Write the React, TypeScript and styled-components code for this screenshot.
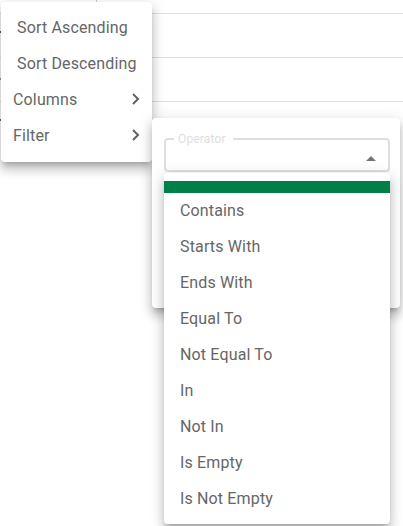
import React from "react";
import styled, { createGlobalStyle } from "styled-components";

const Global = createGlobalStyle`
  html, body { margin: 0; padding: 0; background: #fff; overflow: hidden; }
  body { font-family: Roboto, "Liberation Sans", sans-serif; letter-spacing: 0.15px; }
`;

const Page = styled.div`
  position: relative;
  width: 403px;
  height: 526px;
  overflow: hidden;
  background: #fff;
`;

const GridRows = styled.div`
  display: flex;
  flex-direction: column;
`;

const GridRow = styled.div<{ $h: number; $pad?: number; $last?: boolean }>`
  display: flex;
  align-items: flex-start;
  height: ${(p) => p.$h}px;
  box-sizing: border-box;
  padding-top: ${(p) => p.$pad ?? 0}px;
  border-bottom: ${(p) => (p.$last ? "none" : "1px solid #e0e0e0")};
`;

const HeaderCell = styled.div`
  width: 97px;
  height: 100%;
  box-sizing: border-box;
  border-right: 1px solid #c8c8c8;
`;

const CellStub = styled.div<{ $c: string }>`
  width: 1px;
  height: 2px;
  background: ${(p) => p.$c};
`;

const Popup = styled.div`
  position: absolute;
  box-sizing: border-box;
  background: #fff;
  border-radius: 4px;
  box-shadow: 0 5px 5px -3px rgba(0,0,0,.2), 0 8px 10px 1px rgba(0,0,0,.14), 0 3px 14px 2px rgba(0,0,0,.12);
`;

const Menu = styled(Popup)`
  left: 1px;
  top: 2px;
  width: 151px;
  height: 160px;
  padding: 7px 0;
  z-index: 1;
`;

const MenuItem = styled.div<{ $inset?: boolean }>`
  display: flex;
  align-items: center;
  justify-content: space-between;
  height: 36px;
  padding: 0 11px 0 ${(p) => (p.$inset ? 16 : 12)}px;
  font-size: 16px;
  color: #666;
  white-space: nowrap;
`;

const Chevron = styled.svg`
  width: 10px;
  height: 14px;
  fill: none;
  stroke: #616161;
  stroke-width: 2;
`;

const FilterPanel = styled(Popup)`
  left: 152px;
  top: 118px;
  width: 248px;
  height: 190px;
  padding: 16px 10px 0 12px;
  z-index: 2;
`;

const Field = styled.fieldset`
  margin: 0;
  padding: 0 0 0 8px;
  width: 226px;
  height: 38px;
  box-sizing: border-box;
  border: 2px solid #dedede;
  border-radius: 4px;
  position: relative;
  min-inline-size: 0;
`;

const FieldLegend = styled.legend`
  padding: 0 7px 0 4px;
  font-size: 12px;
  line-height: 10px;
  color: #dedede;
`;

const Arrow = styled.span`
  position: absolute;
  right: 12px;
  top: 12px;
  width: 0;
  height: 0;
  border-left: 5px solid transparent;
  border-right: 5px solid transparent;
  border-bottom: 5px solid #757575;
`;

const Dropdown = styled(Popup)`
  left: 164px;
  top: 173px;
  width: 226px;
  height: 351px;
  padding-top: 8px;
  z-index: 3;
`;

const SelectedBar = styled.div`
  height: 12px;
  background: #007f46;
`;

const Options = styled.div`
  margin-top: -1px;
`;

const Option = styled.div`
  display: flex;
  align-items: center;
  height: 36px;
  padding-left: 16px;
  font-size: 16px;
  color: #666;
`;

const options = ["Contains", "Starts With", "Ends With", "Equal To", "Not Equal To", "In", "Not In", "Is Empty", "Is Not Empty"];

const Arrowhead = () => (
  <Chevron viewBox="0 0 10 14">
    <path d="M2 2l5 5-5 5" />
  </Chevron>
);

export default function App() {
  return (
    <Page>
      <Global />
      <GridRows>
        <GridRow $h={14}><HeaderCell /></GridRow>
        <GridRow $h={44} $pad={17}><CellStub $c="#555" /></GridRow>
        <GridRow $h={44} $pad={20}><CellStub $c="#999" /></GridRow>
        <GridRow $h={44} $pad={17} $last><CellStub $c="#666" /></GridRow>
      </GridRows>
      <Menu>
        <MenuItem $inset>Sort Ascending</MenuItem>
        <MenuItem $inset>Sort Descending</MenuItem>
        <MenuItem>Columns<Arrowhead /></MenuItem>
        <MenuItem>Filter<Arrowhead /></MenuItem>
      </Menu>
      <FilterPanel>
        <Field>
          <FieldLegend>Operator</FieldLegend>
          <Arrow />
        </Field>
      </FilterPanel>
      <Dropdown>
        <SelectedBar />
        <Options>
          {options.map((o) => <Option key={o}>{o}</Option>)}
        </Options>
      </Dropdown>
    </Page>
  );
}
